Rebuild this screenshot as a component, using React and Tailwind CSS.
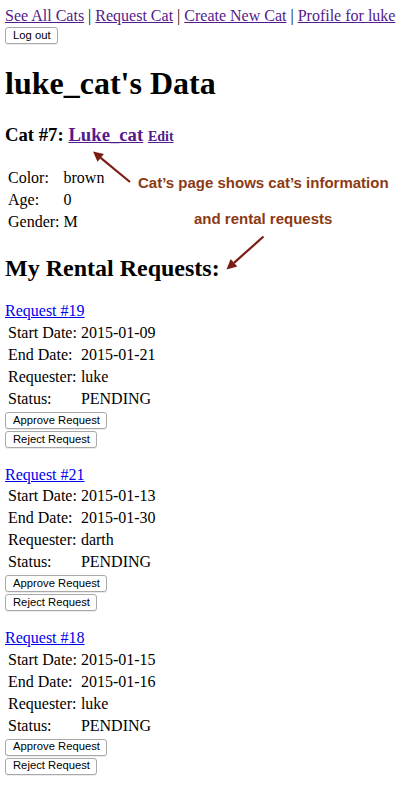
const requests = [
  { id: 19, start: "2015-01-09", end: "2015-01-21", requester: "luke", status: "PENDING" },
  { id: 21, start: "2015-01-13", end: "2015-01-30", requester: "darth", status: "PENDING" },
  { id: 18, start: "2015-01-15", end: "2015-01-16", requester: "luke", status: "PENDING" },
];

function Btn({ children }) {
  return (
    <button className="flex h-[17px] items-center rounded-[3px] border border-[#a9a9a9] bg-white pl-[7px] pr-[6px] font-['Liberation_Sans',Arial,sans-serif] text-[11.25px] leading-none text-black shadow-[0_1px_0_rgba(0,0,0,0.08)]">
      {children}
    </button>
  );
}

function InfoTable({ rows }) {
  return (
    <table className="border-separate border-spacing-[2px]">
      <tbody>
        {rows.map(([k, v]) => (
          <tr key={k}>
            <td className="p-[1px] leading-[18px]">{k}</td>
            <td className="p-[1px] leading-[18px]">{v}</td>
          </tr>
        ))}
      </tbody>
    </table>
  );
}

function Arrow({ x1, y1, x2, y2 }) {
  const a = Math.atan2(y2 - y1, x2 - x1);
  const len = 10;
  const w = 5;
  const bx = x2 - Math.cos(a) * len;
  const by = y2 - Math.sin(a) * len;
  const px = -Math.sin(a) * w;
  const py = Math.cos(a) * w;
  return (
    <g>
      <line x1={x1} y1={y1} x2={bx} y2={by} stroke="#7b1d12" strokeWidth="2.2" />
      <polygon points={`${x2},${y2} ${bx + px},${by + py} ${bx - px},${by - py}`} fill="#7b1d12" />
    </g>
  );
}

export default function App() {
  return (
    <div className="relative min-h-[791px] bg-white pl-[5px] pt-[7px] font-['Liberation_Serif','Times_New_Roman',serif] text-[16px] text-black">
      <div className="leading-[18.4px]">
        <a className="text-[#551a8b] underline">See All Cats</a> |{" "}
        <a className="text-[#551a8b] underline">Request Cat</a> |{" "}
        <a className="text-[#551a8b] underline">Create New Cat</a> |{" "}
        <a className="text-[#551a8b] underline">Profile for luke</a>
      </div>
      <div className="mt-[2px]">
        <Btn>Log out</Btn>
      </div>

      <h1 className="mt-[21px] text-[32px] font-bold leading-[36.8px]">luke_cat's Data</h1>

      <h3 className="mt-[21.4px] text-[18.72px] font-bold leading-[21.5px]">
        Cat #7: <a className="text-[#551a8b] underline">Luke_cat</a>{" "}
        <a className="text-[14px] text-[#551a8b] underline">Edit</a>
      </h3>

      <div className="mt-[18.7px]">
        <InfoTable rows={[["Color:", "brown"], ["Age:", "0"], ["Gender:", "M"]]} />
      </div>

      <h2 className="mt-[21px] text-[24px] font-bold leading-[27.6px]">My Rental Requests:</h2>

      <div className="mt-[20px]">
        {requests.map((r) => (
          <div key={r.id} className="mb-[18px]">
            <a className="block leading-[18.4px] text-[#0000ee] underline">Request #{r.id}</a>
            <InfoTable
              rows={[
                ["Start Date:", r.start],
                ["End Date:", r.end],
                ["Requester:", r.requester],
                ["Status:", r.status],
              ]}
            />
            <div className="mt-[1px] flex flex-col items-start gap-[2px]">
              <Btn>Approve Request</Btn>
              <Btn>Reject Request</Btn>
            </div>
          </div>
        ))}
      </div>

      <svg className="pointer-events-none absolute left-0 top-0" width="401" height="791">
        <Arrow x1={130} y1={182} x2={93} y2={151.5} />
        <Arrow x1={263.5} y1={236.5} x2={226.5} y2={269.5} />
      </svg>
      <div className="absolute left-[138px] top-[175px] whitespace-nowrap font-['Liberation_Sans',Arial,sans-serif] text-[15px] font-bold leading-[16px] text-[#8b3a14]">
        Cat’s page shows cat’s information
      </div>
      <div className="absolute left-[194px] top-[211px] whitespace-nowrap font-['Liberation_Sans',Arial,sans-serif] text-[15px] font-bold leading-[16px] text-[#8b3a14]">
        and rental requests
      </div>
    </div>
  );
}
